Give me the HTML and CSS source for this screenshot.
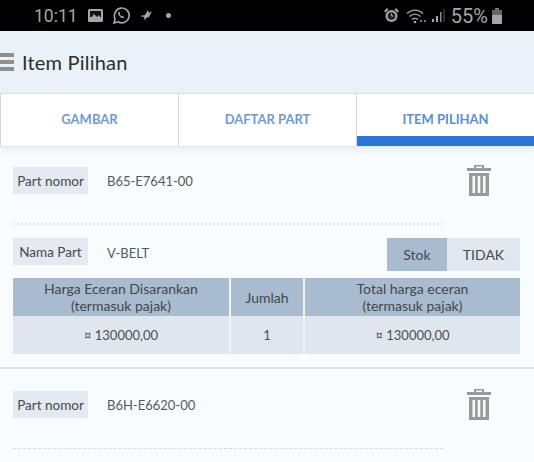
FILE: index.html
```html
<!DOCTYPE html>
<html lang="en">
<head>
  <meta charset="UTF-8">
  <meta name="viewport" content="width=device-width,initial-scale=1.0">
  <title>Item Pilihan</title>
  <link rel="stylesheet" href="styles.css">
</head>
<body>
  <div class="statusbar">
    <div class="status-left">
      <span class="clock">10:11</span>
      <svg class="st-icon" width="17" height="15" viewBox="0 0 17 15"><rect x="1" y="1" width="15" height="13" rx="1.5" fill="#a6a6a6"/><rect x="3" y="3" width="11" height="6" fill="#111"/><path d="M3 11l4-5 3 3 2-2 2 4z" fill="#a6a6a6"/></svg>
      <svg class="st-icon" width="19" height="19" viewBox="0 0 19 19"><path d="M2 17l1.2-4.2A7.4 7.4 0 1 1 6 15.8z" fill="none" stroke="#a6a6a6" stroke-width="1.6"/><path d="M7 5.5c-1.5 1-1 3 .5 4.700s3.500 2.500 4.800 1.300l-1.500-1.700-1.200.6-2-2.300.7-1z" fill="#a6a6a6"/></svg>
      <svg class="st-icon" width="14" height="13" viewBox="0 0 14 13"><path d="M1 7l5-1 3-5 1 3 3-2-3 6-3 1-1 3-1-4z" fill="#a6a6a6"/></svg>
      <span class="dot"></span>
    </div>
    <div class="status-right">
      <svg class="st-icon" width="17" height="17" viewBox="0 0 17 17"><circle cx="8.500" cy="9" r="6" fill="#a6a6a6"/><circle cx="8.500" cy="9" r="3.800" fill="#222"/><path d="M8.500 6.500V9h2" fill="none" stroke="#a6a6a6" stroke-width="1"/><path d="M1 4l3-3 1.500 1.500-3 3zM16 4l-3-3-1.500 1.500 3 3z" fill="#a6a6a6"/></svg>
      <svg class="st-icon wifi" width="21" height="16" viewBox="0 0 21 16"><path d="M1 5.500c5-4.500 11-4.500 16 0M3.500 8.500c3.500-3 7.500-3 11 0M6 11.500c2-1.500 4-1.500 6 0" fill="none" stroke="#a6a6a6" stroke-width="1.400"/><circle cx="9" cy="14" r="1.300" fill="#a6a6a6"/><circle cx="15" cy="13" r="1" fill="#a6a6a6"/><circle cx="19" cy="13" r="1" fill="#a6a6a6"/></svg>
      <svg class="st-icon signal" width="15" height="15" viewBox="0 0 15 15"><rect x="1" y="11" width="2" height="3" fill="#a6a6a6"/><rect x="5" y="8" width="2" height="6" fill="#a6a6a6"/><rect x="9" y="4" width="1.500" height="10" fill="#8a8a8a"/><rect x="12.500" y="1" width="1" height="13" fill="#555"/></svg>
      <span class="percent">55%</span>
      <svg class="st-icon" width="10" height="16" viewBox="0 0 10 16"><rect x="3" y="0" width="4" height="2" fill="#777"/><rect x="0" y="2" width="10" height="14" rx="1" fill="#a6a6a6"/><rect x="0" y="2" width="10" height="5" fill="#666"/></svg>
    </div>
  </div>

  <header class="appbar">
    <span class="burger"><i></i><i></i><i></i></span>
    <h1>Item Pilihan</h1>
  </header>

  <nav class="tabs">
    <a href="#" class="tab">GAMBAR</a>
    <a href="#" class="tab">DAFTAR PART</a>
    <a href="#" class="tab active">ITEM PILIHAN</a>
  </nav>

  <main class="content">
    <section class="item">
      <div class="row part-row">
        <span class="label">Part nomor</span>
        <span class="value">B65-E7641-00</span>
        <svg class="trash" width="26" height="33" viewBox="0 0 26 33"><use href="#trash-icon"/></svg>
      </div>
      <div class="dots"></div>
      <div class="row name-row">
        <span class="label">Nama Part</span>
        <span class="value">V-BELT</span>
        <div class="stock">
          <span class="stock-key">Stok</span>
          <span class="stock-val">TIDAK</span>
        </div>
      </div>
      <table class="prices">
        <tr>
          <th class="col-a">Harga Eceran Disarankan<br>(termasuk pajak)</th>
          <th class="col-b">Jumlah</th>
          <th class="col-c">Total harga eceran<br>(termasuk pajak)</th>
        </tr>
        <tr>
          <td>¤ 130000,00</td>
          <td>1</td>
          <td>¤ 130000,00</td>
        </tr>
      </table>
    </section>

    <section class="item next">
      <div class="row part-row">
        <span class="label">Part nomor</span>
        <span class="value">B6H-E6620-00</span>
        <svg class="trash" width="26" height="33" viewBox="0 0 26 33"><use href="#trash-icon"/></svg>
      </div>
      <div class="dots"></div>
    </section>
  </main>

  <svg width="0" height="0" class="defs">
    <symbol id="trash-icon" viewBox="0 0 26 33">
      <path d="M8 4V1h10v3h7v3H1V4zM10 2.500V4h6V2.500z" fill="#999" fill-rule="evenodd"/>
      <path d="M3 9h20v23H3zM6.500 12v17h2.500V12zM11.700 12v17h2.600V12zM17 12v17h2.500V12z" fill="#999" fill-rule="evenodd"/>
    </symbol>
  </svg>
</body>
</html>
```

FILE: styles.css
```css
html, body {
  margin: 0;
  height: 100%;
  overflow: hidden;
}
body {
  font-family: "Lato", "Open Sans", sans-serif;
  background: #f9fcfe;
  color: #4a4f57;
}
.statusbar {
  height: 31px;
  background: #000;
  display: flex;
  align-items: center;
  justify-content: space-between;
  padding: 0 32px 0 34px;
  color: #a6a6a6;
  font-family: "Roboto", sans-serif;
}
.status-left, .status-right {
  display: flex;
  align-items: center;
}
.clock {
  font-size: 17.5px;
  margin-right: 9px;
}
.status-left .st-icon {
  margin-right: 8px;
}
.dot {
  width: 5px;
  height: 5px;
  border-radius: 50%;
  background: #a6a6a6;
  margin-left: 5px;
}
.status-right .wifi {
  margin-left: 6px;
}
.status-right .signal {
  margin-left: 4px;
}
.percent {
  font-size: 20px;
  margin: 0 4px 0 5px;
}
.appbar {
  height: 62px;
  background: #eaf2f9;
  display: flex;
  align-items: center;
  box-sizing: border-box;
}
.appbar h1 {
  margin: 0 0 0 8px;
  font-size: 20px;
  font-weight: 400;
  letter-spacing: 0.2px;
  color: #2b2d31;
}
.burger {
  width: 14px;
  display: flex;
  flex-direction: column;
  gap: 3px;
}
.burger i {
  display: block;
  height: 4px;
  background: #8f8f8f;
}
.tabs {
  height: 54px;
  display: flex;
  background: #fff;
  border-top: 1px solid #d8dde1;
  border-bottom: 1px solid #e2e6e9;
  box-sizing: border-box;
  box-shadow: 0 4px 7px #0000000f;
}
.tab {
  flex: 0 0 178px;
  box-sizing: border-box;
  border-left: 1px solid #d4d8dc;
  display: flex;
  align-items: center;
  justify-content: center;
  font-size: 13px;
  font-weight: 700;
  color: #6f9bd2;
  text-decoration: none;
  padding-bottom: 2px;
}
.tab.active {
  color: #5c8fcc;
  box-shadow: inset 0 -10px 0 #2f76d6;
}
.item {
  padding: 20px 14px 0 13px;
}
.row {
  display: flex;
  align-items: flex-start;
}
.label {
  width: 75px;
  height: 27px;
  background: #e4eaf0;
  display: flex;
  align-items: center;
  justify-content: center;
  font-size: 13.500px;
  color: #45494f;
}
.value {
  margin-left: 19px;
  line-height: 29px;
  font-size: 13px;
  color: #55595f;
}
.part-row {
  position: relative;
  height: 27px;
}
.trash {
  position: absolute;
  left: 453px;
  top: -3px;
}
.dots {
  width: 430px;
  border-top: 2px dotted #e3e6e9;
  margin-top: 29px;
}
.name-row {
  margin-top: 13px;
  height: 40px;
}
.name-row .value {
  line-height: 30px;
}
.stock {
  margin-left: auto;
  display: flex;
  height: 33px;
  font-size: 14px;
}
.stock-key, .stock-val {
  display: flex;
  align-items: center;
  justify-content: center;
  color: #454a52;
}
.stock-key {
  width: 60px;
  background: #a9bbcf;
}
.stock-val {
  width: 73px;
  background: #e2e8ef;
}
.prices {
  width: 507px;
  border-collapse: collapse;
  table-layout: fixed;
  font-size: 13px;
  text-align: center;
}
.prices th {
  height: 38px;
  padding: 0;
  background: #a9bbcf;
  font-size: 14px;
  font-weight: 400;
  line-height: 17px;
  color: #42474f;
}
.prices td {
  height: 38px;
  padding: 0;
  background: #e0e6ed;
  color: #4a4f57;
}
.prices th + th, .prices td + td {
  border-left: 2px solid #eef3f8;
}
.col-a { width: 216px; }
.col-b { width: 72px; }
.item.next {
  margin-top: 13px;
  border-top: 2px solid #dfe3e7;
  padding-top: 22px;
}
.item.next .dots {
  margin-top: 30px;
  border-top: 1px dashed #d6dadd;
}
.defs {
  position: absolute;
}
```
